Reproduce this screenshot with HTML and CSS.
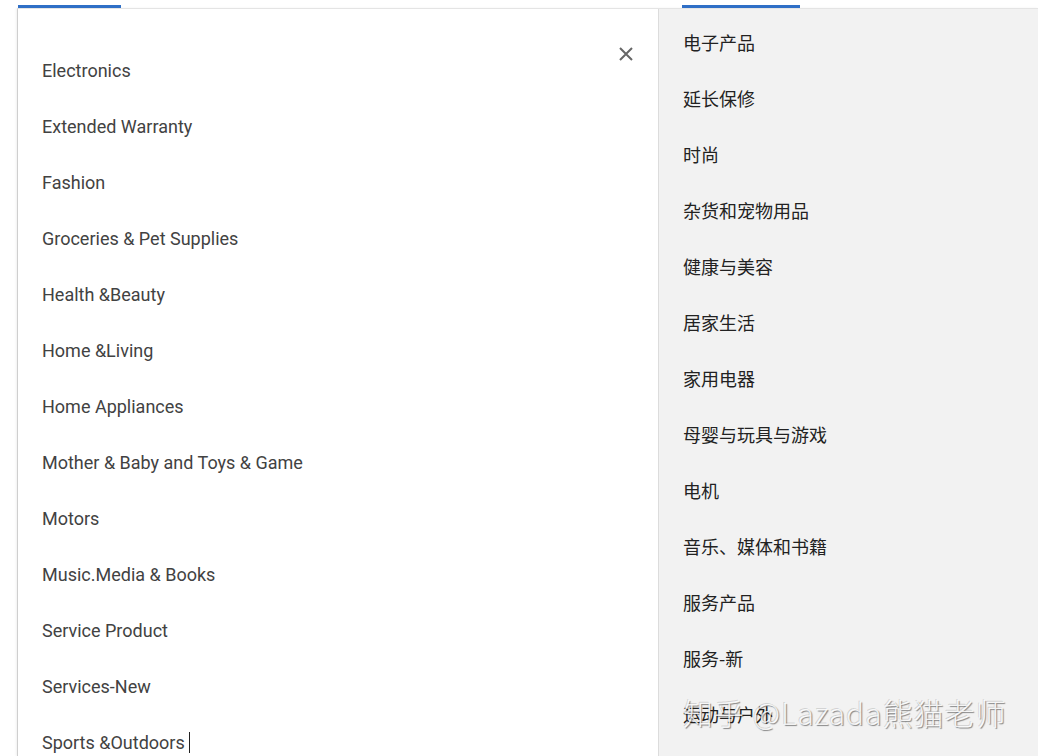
FILE: index.html
```html
<!DOCTYPE html>
<html lang="zh">
<head>
<meta charset="utf-8">
<title>Categories</title>
<link rel="stylesheet" href="styles.css">
</head>
<body>
<div class="page">
  <div class="tabs">
    <div class="tab tab-left"></div>
    <div class="tab tab-right"></div>
  </div>
  <div class="frame">
    <div class="left">
      <button class="close" aria-label="close">
        <svg width="16" height="16" viewBox="0 0 16 16"><path d="M2 2 L14 14 M14 2 L2 14" stroke="#666" stroke-width="2" fill="none"/></svg>
      </button>
      <ul class="list">
        <li>Electronics</li>
        <li>Extended Warranty</li>
        <li>Fashion</li>
        <li>Groceries &amp; Pet Supplies</li>
        <li>Health &amp;Beauty</li>
        <li>Home &amp;Living</li>
        <li>Home Appliances</li>
        <li>Mother &amp; Baby and Toys &amp; Game</li>
        <li>Motors</li>
        <li>Music.Media &amp; Books</li>
        <li>Service Product</li>
        <li>Services-New</li>
        <li>Sports &amp;Outdoors<span class="caret"></span></li>
      </ul>
    </div>
    <div class="right">
      <ul class="list cn">
        <li>电子产品</li>
        <li>延长保修</li>
        <li>时尚</li>
        <li>杂货和宠物用品</li>
        <li>健康与美容</li>
        <li>居家生活</li>
        <li>家用电器</li>
        <li>母婴与玩具与游戏</li>
        <li>电机</li>
        <li>音乐、媒体和书籍</li>
        <li>服务产品</li>
        <li>服务-新</li>
        <li>运动与户外</li>
        <li>附件与配件</li>
      </ul>
      <div class="watermark">知乎 @Lazada熊猫老师</div>
    </div>
  </div>
</div>
</body>
</html>
```

FILE: styles.css
```css
html, body {
  margin: 0;
  padding: 0;
  background: #fff;
  height: 100%;
  overflow: hidden;
}
.page {
  margin-left: 17px;
  padding-top: 5px;
  height: 751px;
  display: flex;
  flex-direction: column;
}
.tabs {
  height: 3px;
  position: relative;
  display: flex;
}
.tab {
  height: 3px;
  background: #2f6fc6;
}
.tab-left {
  margin-left: 1px;
  width: 103px;
}
.tab-right {
  margin-left: 561px;
  width: 118px;
}
.frame {
  flex: 1;
  display: flex;
  border-top: 1px solid #e4e4e4;
  border-left: 1px solid #cfcfcf;
  box-shadow: -1px 0 2px rgba(0,0,0,0.06);
  min-height: 0;
}
.left {
  width: 640px;
  position: relative;
  padding: 34px 0 0 24px;
  box-sizing: border-box;
  overflow: hidden;
}
.close {
  position: absolute;
  top: 37px;
  right: 24px;
  width: 16px;
  height: 16px;
  padding: 0;
  border: 0;
  background: none;
  display: flex;
}
.list {
  list-style: none;
  margin: 0;
  padding: 0;
}
.list li {
  height: 56px;
  line-height: 56px;
  font-family: Roboto, "Noto Sans", sans-serif;
  font-size: 18px;
  color: #424242;
  white-space: nowrap;
}
.caret {
  display: inline-block;
  width: 1px;
  height: 21px;
  background: #222;
  margin-left: 4px;
  vertical-align: -4px;
}
.right {
  flex: 1;
  position: relative;
  background: #f2f2f2;
  border-left: 1px solid #dcdcdc;
  padding: 5px 0 0 24px;
  overflow: hidden;
}
.cn li {
  font-family: "Noto Sans CJK SC", "Microsoft YaHei", sans-serif;
  font-size: 18px;
  color: #222;
}
.watermark {
  position: absolute;
  left: 24px;
  top: 682px;
  font-family: "Noto Sans CJK SC", sans-serif;
  font-size: 30px;
  line-height: 42px;
  font-weight: 300;
  color: rgba(255,255,255,0.85);
  text-shadow: 1px 1px 1px rgba(0,0,0,0.45), -1px -1px 0 rgba(0,0,0,0.12);
  white-space: nowrap;
  letter-spacing: 1px;
}
```
